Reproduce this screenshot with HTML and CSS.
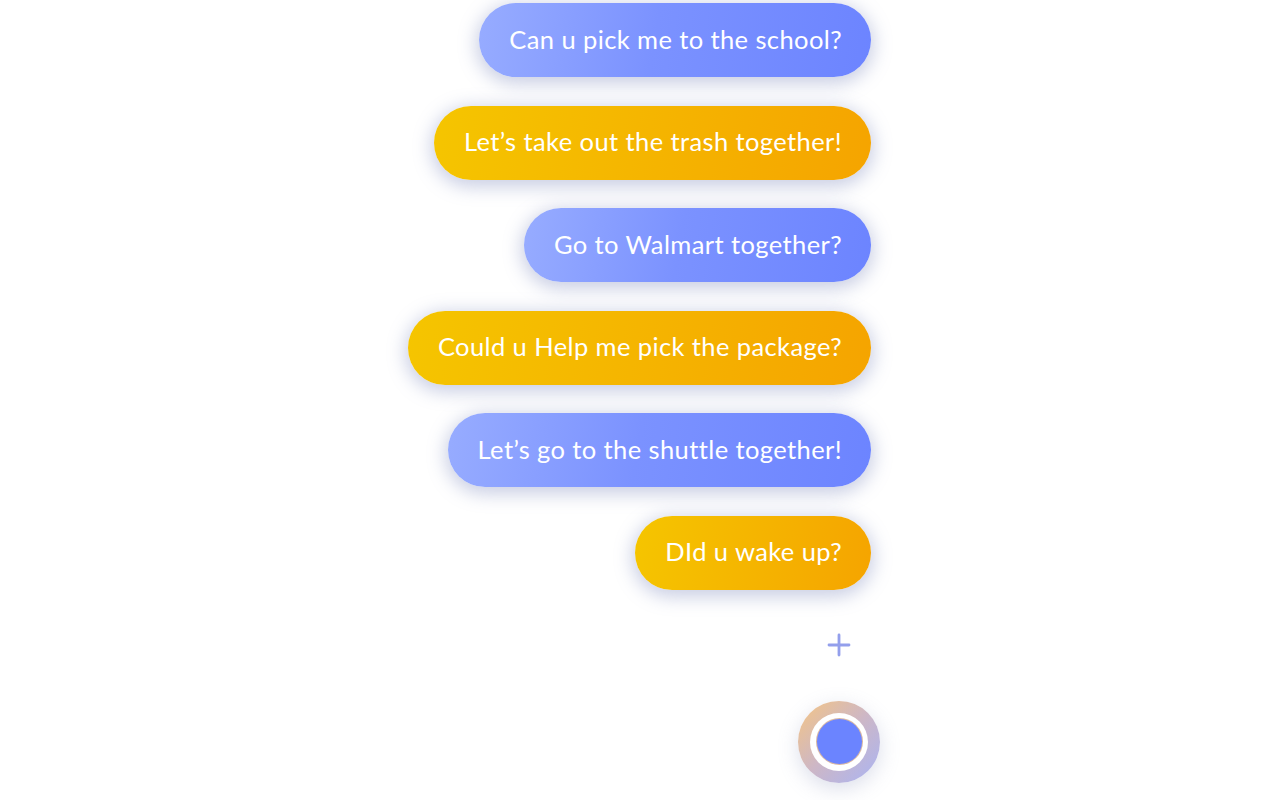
FILE: index.html
```html
<!DOCTYPE html>
<html>
<head>
<meta charset="utf-8">
<link rel="stylesheet" href="styles.css">
</head>
<body>
<main class="stage">
  <div class="list">
    <div class="pill blue">Can u pick me to the school?</div>
    <div class="pill yellow">Let’s take out the trash together!</div>
    <div class="pill blue">Go to Walmart together?</div>
    <div class="pill yellow">Could u Help me pick the package?</div>
    <div class="pill blue">Let’s go to the shuttle together!</div>
    <div class="pill yellow">DId u wake up?</div>
  </div>
  <div class="controls">
    <div class="plus">
      <svg width="24" height="24" viewBox="0 0 24 24"><path d="M12 2v20M2 12h20" stroke="#939fec" stroke-width="2.8" stroke-linecap="round" fill="none"/></svg>
    </div>
    <div class="rec">
      <div class="rec-ring"><div class="rec-core"></div></div>
    </div>
  </div>
</main>
</body>
</html>
```
FILE: styles.css
```css
html, body {
  margin: 0;
  padding: 0;
  background: #ffffff;
}
.stage {
  width: 100%;
  height: 800px;
  box-sizing: border-box;
  padding-right: 416px;
  display: flex;
  flex-direction: column;
  align-items: flex-end;
  overflow: hidden;
  font-family: "Lato", "Noto Sans", sans-serif;
}
.list {
  display: flex;
  flex-direction: column;
  align-items: flex-end;
  gap: 28.6px;
  padding-top: 3px;
}
.pill {
  height: 74px;
  box-sizing: border-box;
  border-radius: 37px;
  padding: 0 29px 3px 30px;
  display: flex;
  align-items: center;
  color: #ffffff;
  font-size: 25.5px;
  letter-spacing: 0.4px;
  white-space: nowrap;
  box-shadow: 0 4px 18px 3px rgba(115, 130, 185, 0.38);
}
.blue {
  background: linear-gradient(100deg, #97acff 0%, #7b92ff 45%, #6c84ff 100%);
}
.yellow {
  background: linear-gradient(100deg, #f5c500 0%, #f5b300 55%, #f5a400 100%);
}
.controls {
  display: flex;
  flex-direction: column;
  align-items: center;
  width: 82px;
  margin-right: -9px;
}
.plus {
  margin-top: 43px;
  height: 24px;
  display: flex;
}
.rec {
  margin-top: 44px;
  width: 82px;
  height: 82px;
  border-radius: 50%;
  background: linear-gradient(135deg, #f5c583 0%, #cdb7c6 50%, #a9b4f4 100%);
  box-shadow: 0 6px 20px rgba(140, 150, 190, 0.3);
  display: flex;
  align-items: center;
  justify-content: center;
}
.rec-ring {
  width: 58px;
  height: 58px;
  border-radius: 50%;
  background: #ffffff;
  display: flex;
  align-items: center;
  justify-content: center;
}
.rec-core {
  width: 45px;
  height: 45px;
  border-radius: 50%;
  background: #6b84ff;
  box-shadow: 0 0 0 1px #d9b8a4;
}
```
